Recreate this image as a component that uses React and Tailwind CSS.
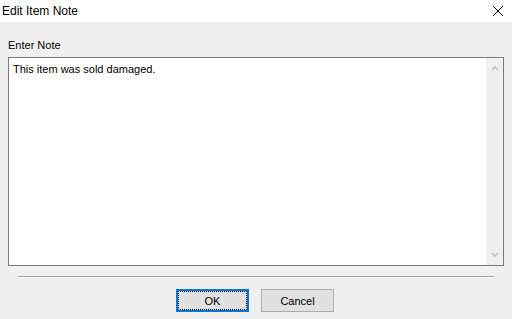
export default function App() {
  return (
    <div className="w-[512px] h-[319px] bg-[#f0f0f0] font-['Liberation_Sans',sans-serif] text-[11px] text-black flex flex-col overflow-hidden">
      {/* Title bar */}
      <div className="h-[22px] bg-white flex items-center justify-between pl-[2px] pr-[8px]">
        <span className="text-[12px] leading-[14px]">Edit Item Note</span>
        <svg width="12" height="12" viewBox="0 0 12 12" className="mt-[-1px]">
          <path d="M1 1 L11 11 M11 1 L1 11" stroke="#000" strokeWidth="1" fill="none" />
        </svg>
      </div>

      {/* Body */}
      <div className="px-2 pt-[16px] flex flex-col">
        <label className="leading-[14px]">Enter Note</label>
        <div className="mt-[5px] h-[209px] border border-[#7a7a7a] flex bg-white">
          <div className="flex-1 pl-[4px] pt-[4px] leading-[14px]">This item was sold damaged.</div>
          <div className="w-[17px] bg-[#f0f0f0] flex flex-col justify-between items-center py-[7px]">
            <svg width="8" height="6" viewBox="0 0 8 6">
              <path d="M1 5 L4 2 L7 5" stroke="#c2c2c2" strokeWidth="1.6" fill="none" />
            </svg>
            <svg width="8" height="6" viewBox="0 0 8 6">
              <path d="M1 1 L4 4 L7 1" stroke="#c2c2c2" strokeWidth="1.6" fill="none" />
            </svg>
          </div>
        </div>

        {/* Separator */}
        <div className="mt-[10px] mx-[10px] border-t border-[#a0a0a0] border-b border-b-white" />

        {/* Buttons */}
        <div className="mt-[11px] flex justify-center gap-[12px] pr-[2px]">
          <button className="w-[73px] h-[23px] bg-[#e1e1e1] border-2 border-[#0078d7] p-0 flex">
            <span className="flex-1 flex items-center justify-center border border-dotted border-black leading-[14px]">OK</span>
          </button>
          <button className="w-[73px] h-[23px] bg-[#e1e1e1] border border-[#adadad] flex items-center justify-center leading-[14px]">
            Cancel
          </button>
        </div>
      </div>
    </div>
  );
}
